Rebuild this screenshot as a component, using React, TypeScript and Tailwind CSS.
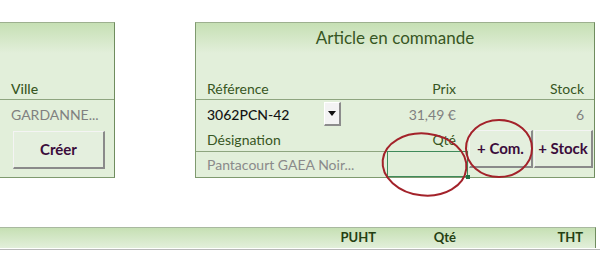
import React from "react";

const FONT = { fontFamily: "Lato, 'Open Sans', sans-serif" };

function XlButton({ label, className }: { label: string; className: string }) {
  return (
    <div
      className={`flex items-center justify-center bg-[#e4efde] border-t border-l border-t-[#f4f4f4] border-l-[#f4f4f4] border-r-2 border-b-2 border-r-[#8a8a8a] border-b-[#8a8a8a] text-[15px] font-bold text-[#3b0c3b] ${className}`}
    >
      {label}
    </div>
  );
}

export default function App() {
  return (
    <div className="relative w-[600px] h-[277px] bg-white overflow-hidden" style={FONT}>
      <div className="flex pt-[22px]">
        {/* Left panel */}
        <div className="w-[115px] h-[156px] border-t border-r border-b border-t-[#9db08f] border-r-[#6f8c5e] border-b-[#7f9a6f] bg-[linear-gradient(to_bottom,#c6e0b4_0px,#e2efda_30px,#e2efda_100%)] flex flex-col">
          <div className="h-[54px]" />
          <div className="h-[22px] flex items-center pl-[11px] text-[14px] text-[#375623] font-medium">Ville</div>
          <div className="h-px bg-[#8ea57f]" />
          <div className="h-[28px] flex items-center pl-[11px] text-[14px] text-[#808080]">GARDANNE...</div>
          <div className="pl-[13px] pt-[3px]">
            <XlButton label="Créer" className="w-[92px] h-[38px]" />
          </div>
        </div>

        {/* Right panel */}
        <div className="ml-[80px] w-[400px] h-[156px] border border-t-[#9db08f] border-l-[#7f9a6f] border-r-[#6f8c5e] border-b-[#7f9a6f] bg-[linear-gradient(to_bottom,#c6e0b4_0px,#e2efda_30px,#e2efda_100%)] flex flex-col">
          <div className="h-[54px]">
            <div className="h-[29px] flex items-center justify-center text-[17px] text-[#375623]">Article en commande</div>
          </div>
          <div className="h-[22px] flex items-center text-[14px] text-[#375623]">
            <div className="w-[191px] pl-[11px]">Référence</div>
            <div className="w-[81px] text-right pr-[12px]">Prix</div>
            <div className="flex-1 text-right pr-[10px]">Stock</div>
          </div>
          <div className="h-px bg-[#8ea57f]" />
          <div className="h-[28px] flex items-center text-[14px]">
            <div className="w-[191px] pl-[11px] flex items-center">
              <span className="w-[117px] text-[#141414] font-medium">3062PCN-42</span>
              <div className="w-[17px] h-[24px] bg-[#f3f3f3] border-r-2 border-b-2 border-r-[#8c8c8c] border-b-[#8c8c8c] border-t border-l border-t-white border-l-white flex items-center justify-center">
                <svg width="8" height="5" viewBox="0 0 8 5">
                  <polygon points="0,0 8,0 4,5" fill="#111" />
                </svg>
              </div>
            </div>
            <div className="w-[81px] text-right pr-[12px] text-[#808080]">31,49 €</div>
            <div className="flex-1 text-right pr-[10px] text-[#808080]">6</div>
          </div>
          <div className="flex flex-1">
            <div className="w-[191px] flex flex-col">
              <div className="h-[23px] flex items-center pl-[11px] text-[14px] text-[#375623]">Désignation</div>
              <div className="h-px bg-[#8ea57f]" />
              <div className="flex-1 flex items-center pl-[11px] text-[14px] text-[#8a8a8a]">Pantacourt GAEA Noir...</div>
            </div>
            <div className="w-[81px] flex flex-col">
              <div className="h-[23px] flex items-center justify-end pr-[12px] text-[14px] text-[#375623]">Qté</div>
              <div className="relative flex-1 border border-[#3f8a5a]">
                <div className="absolute -right-[3px] -bottom-[3px] w-[4px] h-[4px] bg-[#217346]" />
              </div>
            </div>
            <div className="flex-1 flex gap-[1px] pt-[2px] pl-[1px]">
              <XlButton label="+ Com." className="w-[64px] h-[38px]" />
              <XlButton label="+ Stock" className="w-[59px] h-[38px]" />
            </div>
          </div>
        </div>
      </div>

      {/* Bottom bar */}
      <div className="mt-[49px] w-[596px]">
        <div className="h-[21px] border-t border-r border-t-[#a9b9a0] border-r-[#6f8c5e] bg-[linear-gradient(to_bottom,#c6e0b4,#e2efda)] flex items-center justify-end text-[13px] font-bold text-[#243f12]">
          <div className="text-right">PUHT</div>
          <div className="w-[80px] text-right">Qté</div>
          <div className="w-[139px] text-right pr-[12px]">THT</div>
        </div>
      </div>
      <div className="mt-[1px] h-px w-[600px] bg-[#b8b8b8]" />

      {/* Annotation ellipses */}
      <svg className="absolute left-0 top-0 pointer-events-none" width="600" height="277">
        <ellipse cx="424.5" cy="164.5" rx="42" ry="31" fill="none" stroke="#a3222a" strokeWidth="2" transform="rotate(6 424.5 164.5)" />
        <ellipse cx="499" cy="148.5" rx="33" ry="28.5" fill="none" stroke="#a3222a" strokeWidth="2" />
      </svg>
    </div>
  );
}
